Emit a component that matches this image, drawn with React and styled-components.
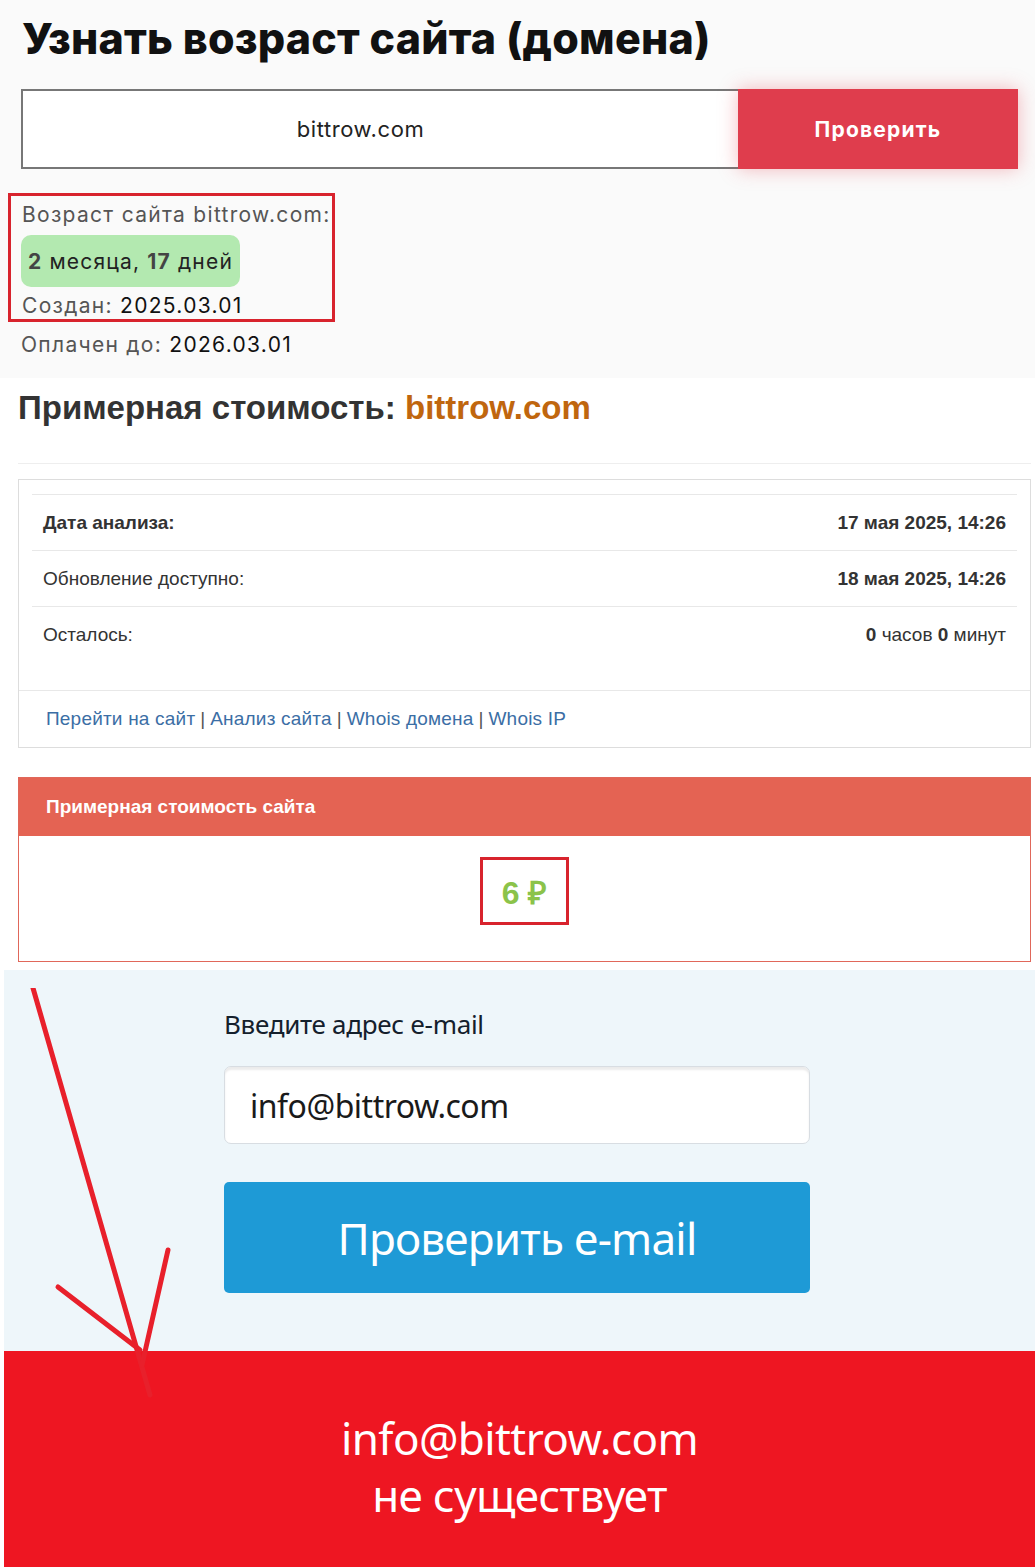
import React from 'react';
import styled, { createGlobalStyle } from 'styled-components';

const GlobalStyle = createGlobalStyle`
  body {
    margin: 0;
    background: #ffffff;
    font-family: "Open Sans", "Liberation Sans", sans-serif;
  }
`;

const App = () => {
  return (
    <Page>
      <GlobalStyle />
      <AgeSection>
        <Title>Узнать возраст сайта (домена)</Title>
        <CheckForm>
          <DomainInput>bittrow.com</DomainInput>
          <CheckButton>Проверить</CheckButton>
        </CheckForm>
        <AgeBox>
          <InfoLine>Возраст сайта bittrow.com:</InfoLine>
          <AgePill><b>2</b> месяца, <b>17</b> дней</AgePill>
          <InfoLine>Создан: <Value>2025.03.01</Value></InfoLine>
        </AgeBox>
        <PaidLine>Оплачен до: <Value>2026.03.01</Value></PaidLine>
      </AgeSection>

      <PriceSection>
        <PriceTitle>Примерная стоимость: <span>bittrow.com</span></PriceTitle>
        <Divider />
        <Panel>
          <InfoTable>
            <tbody>
              <tr>
                <td><b>Дата анализа:</b></td>
                <td><b>17 мая 2025, 14:26</b></td>
              </tr>
              <tr>
                <td>Обновление доступно:</td>
                <td><b>18 мая 2025, 14:26</b></td>
              </tr>
              <tr>
                <td>Осталось:</td>
                <td><b>0</b> часов <b>0</b> минут</td>
              </tr>
            </tbody>
          </InfoTable>
          <PanelFooter>
            <a href='#'>Перейти на сайт</a> | <a href='#'>Анализ сайта</a> | <a href='#'>Whois домена</a> | <a href='#'>Whois IP</a>
          </PanelFooter>
        </Panel>

        <CostPanel>
          <CostHeader>Примерная стоимость сайта</CostHeader>
          <CostBody>
            <CostValue>6 ₽</CostValue>
          </CostBody>
        </CostPanel>
      </PriceSection>

      <EmailSection>
        <EmailForm>
          <EmailLabel>Введите адрес e-mail</EmailLabel>
          <EmailInput>info@bittrow.com</EmailInput>
          <EmailButton>Проверить e-mail</EmailButton>
        </EmailForm>
      </EmailSection>

      <ResultSection>
        <div>info@bittrow.com</div>
        <div>не существует</div>
      </ResultSection>

      <Arrow width='200' height='420' viewBox='0 0 200 420'>
        <path d='M33 0 L150 407' />
        <path d='M58 299 L140 362' />
        <path d='M168 262 L142 377' />
      </Arrow>
    </Page>
  );
};

const Page = styled.div`
  position: relative;
  width: 1035px;
`;

const AgeSection = styled.div`
  background: #fafafa;
  padding: 10px 17px 20px 0;
  font-family: "Inter", "Open Sans", sans-serif;
`;

const Title = styled.h1`
  margin: 0 0 23px 22px;
  font-size: 43px;
  line-height: 56px;
  font-weight: 800;
  color: #111;
  letter-spacing: 0.2px;
`;

const CheckForm = styled.div`
  display: flex;
  height: 80px;
  margin-left: 21px;
`;

const DomainInput = styled.div`
  flex: 1;
  display: flex;
  align-items: center;
  justify-content: center;
  padding-right: 40px;
  background: #fff;
  border: 2px solid #777;
  border-right: none;
  font-size: 22px;
  letter-spacing: 0.6px;
  color: #222;
`;

const CheckButton = styled.div`
  width: 280px;
  display: flex;
  align-items: center;
  justify-content: center;
  background: #df3d4d;
  color: #fff;
  font-size: 21px;
  font-weight: 700;
  letter-spacing: 1.2px;
  box-shadow: 0 0 18px rgba(230, 60, 75, 0.35);
`;

const AgeBox = styled.div`
  width: 310px;
  margin: 24px 0 0 8px;
  padding: 5px 0 0 11px;
  border: 3px solid #d8232d;
  display: flex;
  flex-direction: column;
  align-items: flex-start;
`;

const InfoLine = styled.div`
  font-size: 21px;
  line-height: 27px;
  letter-spacing: 1.3px;
  color: #555;
  white-space: nowrap;
`;

const Value = styled.span`
  color: #111;
`;

const AgePill = styled.div`
  margin: 7px 0 5px -1px;
  height: 52px;
  padding: 0 7px;
  display: flex;
  align-items: center;
  gap: 7px;
  background: #b3e9b0;
  border-radius: 10px;
  font-size: 21px;
  letter-spacing: 1.2px;
  color: #222;
  white-space: nowrap;

  b {
    color: #444;
    font-weight: 700;
  }
`;

const PaidLine = styled(InfoLine)`
  margin: 9px 0 0 21px;
`;

const PriceSection = styled.div`
  padding: 12px 4px 8px 18px;
  font-family: "Liberation Sans", Arial, sans-serif;
  color: #333;
`;

const PriceTitle = styled.h2`
  margin: 0;
  font-size: 33px;
  line-height: 36px;
  font-weight: 700;
  color: #333;

  span {
    color: #c0660e;
  }
`;

const Divider = styled.div`
  margin: 37px 0 15px;
  border-top: 1px solid #eee;
`;

const Panel = styled.div`
  border: 1px solid #ddd;
  background: #fff;
`;

const InfoTable = styled.table`
  width: calc(100% - 26px);
  margin: 14px 13px 28px;
  border-collapse: collapse;
  font-size: 19px;
  color: #333;

  td {
    height: 55px;
    padding: 0 11px;
    border-top: 1px solid #e8e8e8;
  }

  td:last-child {
    text-align: right;
  }
`;

const PanelFooter = styled.div`
  height: 56px;
  display: flex;
  align-items: center;
  gap: 5px;
  padding-left: 27px;
  border-top: 1px solid #e8e8e8;
  font-size: 19px;
  color: #555;

  a {
    color: #3b6ea5;
    text-decoration: none;
    letter-spacing: 0.2px;
  }
`;

const CostPanel = styled.div`
  margin-top: 29px;
  border: 1px solid #e0675a;
`;

const CostHeader = styled.div`
  height: 58px;
  display: flex;
  align-items: center;
  padding-left: 27px;
  background: #e46353;
  color: #fff;
  font-size: 19px;
  font-weight: 700;
`;

const CostBody = styled.div`
  height: 125px;
  display: flex;
  justify-content: center;
  padding-top: 21px;
  box-sizing: border-box;
  background: #fff;
`;

const CostValue = styled.div`
  width: 83px;
  height: 62px;
  display: flex;
  align-items: center;
  justify-content: center;
  border: 3px solid #d8232d;
  color: #8bc34a;
  font-size: 32px;
  font-weight: 700;
`;

const EmailSection = styled.div`
  margin-left: 4px;
  padding: 38px 0 58px 220px;
  background: #eef6fa;
  font-family: "Noto Sans", "Open Sans", sans-serif;
`;

const EmailForm = styled.div`
  width: 586px;
  display: flex;
  flex-direction: column;
`;

const EmailLabel = styled.div`
  font-size: 26px;
  line-height: 32px;
  color: #14202c;
  letter-spacing: -0.3px;
`;

const EmailInput = styled.div`
  margin-top: 26px;
  height: 78px;
  display: flex;
  align-items: center;
  padding-left: 25px;
  box-sizing: border-box;
  background: #fff;
  border: 1px solid #d8dde2;
  border-radius: 7px;
  box-shadow: inset 0 3px 2px rgba(0, 0, 0, 0.08);
  font-size: 32px;
  color: #1a1a1a;
  letter-spacing: -0.5px;
`;

const EmailButton = styled.div`
  margin-top: 38px;
  height: 111px;
  display: flex;
  align-items: center;
  justify-content: center;
  background: #1e9ad6;
  border-radius: 5px;
  color: #fff;
  font-size: 44px;
  letter-spacing: -0.8px;
`;

const ResultSection = styled.div`
  margin-left: 4px;
  height: 216px;
  display: flex;
  flex-direction: column;
  align-items: center;
  justify-content: center;
  padding-top: 16px;
  box-sizing: border-box;
  background: #ee1622;
  color: #fff;
  font-family: "Noto Sans", "Open Sans", sans-serif;
  font-size: 44px;
  line-height: 57px;
  letter-spacing: -0.6px;
`;

const Arrow = styled.svg`
  position: absolute;
  left: 0;
  top: 988px;
  pointer-events: none;

  path {
    stroke: #e8202b;
    stroke-width: 5;
    stroke-linecap: round;
    fill: none;
  }
`;

export default App;
